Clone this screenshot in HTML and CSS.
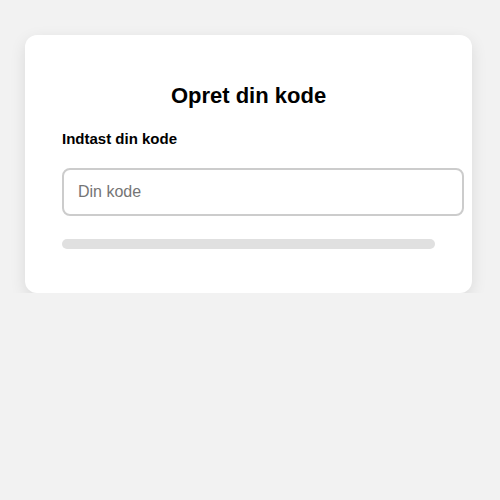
FILE: index.html
```html
<!DOCTYPE html>
<html>
<head>
    <meta charset="utf-8">
    <link rel="stylesheet" href="styles.css">
</head>
<body>
    <div class="card">
        <h2 class="title">Opret din kode</h2>
        <label for="code" class="label">Indtast din kode</label>
        <input type="password" id="code" class="code-input" placeholder="Din kode">
        <div class="progress">
            <div class="progress-fill"></div>
        </div>
    </div>
</body>
</html>
```

FILE: styles.css
```css
body {
    margin: 0;
    padding: 35px 0 0 25px;
    background: #f2f2f2;
    font-family: "Liberation Sans", Arial, sans-serif;
    color: #000;
}

.card {
    box-sizing: border-box;
    width: 447px;
    padding: 48px 37px 44px;
    background: #fff;
    border-radius: 12px;
    box-shadow: 0 5px 16px rgba(0, 0, 0, 0.1);
}

.title {
    margin: 0 0 21px;
    font-size: 22px;
    font-weight: bold;
    text-align: center;
}

.label {
    display: block;
    margin-bottom: 21px;
    font-size: 15px;
    font-weight: bold;
}

.code-input {
    display: block;
    box-sizing: border-box;
    width: 402px;
    height: 48px;
    margin: 0 0 23px;
    padding: 0 14px;
    border: 2px solid #ccc;
    border-radius: 8px;
    font-family: inherit;
    font-size: 16px;
    outline: none;
}

.code-input::placeholder {
    color: #757575;
}

.progress {
    height: 10px;
    background: #e0e0e0;
    border-radius: 5px;
    overflow: hidden;
}

.progress-fill {
    width: 0;
    height: 100%;
    background: #4caf50;
}
```
